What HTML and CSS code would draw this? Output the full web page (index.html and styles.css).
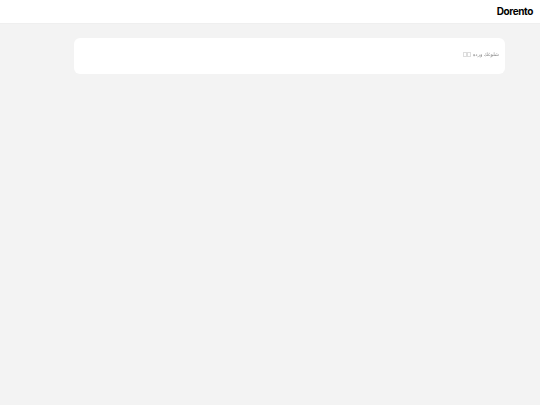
FILE: index.html
```html
<!DOCTYPE html>
<html lang="fa" dir="rtl">
<head>
    <meta charset="UTF-8">
    <title>Dorento</title>
    <link rel="stylesheet" href="styles.css">
</head>
<body>
    <header class="topbar">
        <div class="logo" dir="ltr">Dorento</div>
    </header>
    <main class="content">
        <div class="card">
            <div class="card-title">
                <span>شلوغك ورده</span>
                <span class="boxes"><i class="box"></i><i class="box"></i></span>
            </div>
        </div>
    </main>
</body>
</html>
```

FILE: styles.css
```css
html, body {
    height: 100%;
}

body {
    margin: 0;
    background: #f3f3f3;
    font-family: Inter, "DejaVu Sans", sans-serif;
    overflow: hidden;
}

.topbar {
    height: 22px;
    background: #fff;
    border-bottom: 1px solid #efefef;
    display: flex;
    align-items: center;
    padding: 0 7px 1px;
}

.logo {
    font-size: 10px;
    font-weight: 700;
    letter-spacing: -0.4px;
    color: #000;
}

.content {
    padding: 14px 35px 0 35px;
}

.card {
    width: 431px;
    height: 36px;
    box-sizing: border-box;
    background: #fff;
    border-radius: 6px;
    padding: 12px 6px 0;
}

.card-title {
    font-size: 5px;
    line-height: 8px;
    color: #888;
    display: flex;
    align-items: center;
    gap: 2px;
    will-change: opacity;
}

.boxes {
    display: flex;
}

.box {
    width: 4px;
    height: 5px;
    box-sizing: border-box;
    border: 1px solid #ddd;
}
```
